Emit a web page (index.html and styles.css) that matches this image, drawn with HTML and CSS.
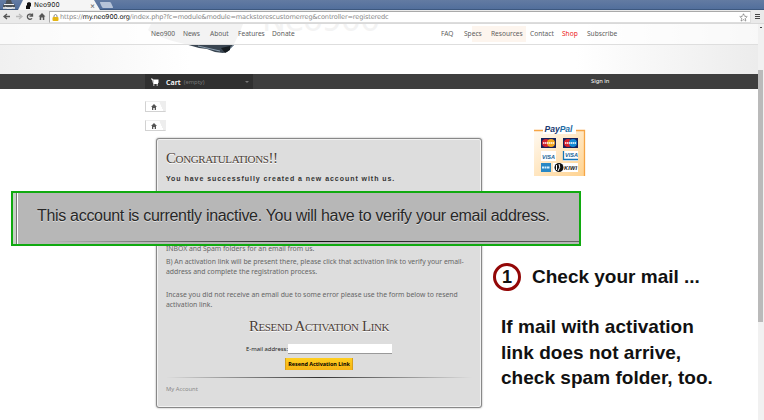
FILE: index.html
```html
<!DOCTYPE html>
<html lang="en">
<head>
<meta charset="utf-8">
<title>Neo900</title>
<link rel="stylesheet" href="styles.css">
</head>
<body>
<div class="tabs">
  <svg class="incognito" width="18" height="10" viewBox="0 0 18 10"><rect x="3" y="7" width="12" height="2" fill="#c9ced3"/><path d="M6 1L7 0H11L12 3L15 5V7H3V5L6 3Z" fill="#4b5157"/><path d="M4 4.500H14M5 7L8 8.500L9 8L11 8.500L13 7" stroke="#edf0f2" fill="none"/></svg>
  <div class="tab"><svg width="6" height="8" viewBox="0 0 6 8"><path d="M1 2L3 1L5 2V5L4 6V8H0V5L1 4Z" fill="#111"/></svg><span>Neo900</span><b>×</b></div>
  <i class="newtab"></i>
</div>
<div class="toolbar">
  <svg width="48" height="13" viewBox="0 0 48 13"><g fill="none" stroke="#555" stroke-width="1.3"><path d="M10 6.5H4M7 4L4 6.5L7 9"/><path stroke="#bbb" d="M16 6.5H22M19 4L22 6.5L19 9"/><path d="M32 5A2.6 2.6 0 1 0 32 8.3M32.5 3.5V6H29.5"/></g><path d="M38.5 6.5L42 3L45.5 6.5H44.3V10H42.8V7.6H41.2V10H39.7V6.5Z" fill="#555"/></svg>
  <div class="address"><svg width="7" height="9" viewBox="0 0 7 9"><path d="M2 4V2.5Q3.5 .5 5 2.5V4" stroke="#888" fill="none"/><rect x=".5" y="4" width="6" height="4" rx="1" fill="#e4b516"/></svg><span class="url">https://<b>my.neo900.org</b>/index.php?fc=module&amp;module=mackstorescustomerreg&amp;controller=registeredc</span><svg class="star" width="9" height="9" viewBox="0 0 9 9"><path d="M4.5 .8L5.6 3.2L8.2 3.5L6.3 5.3L6.9 8L4.5 6.7L2.1 8L2.7 5.3L.8 3.5L3.4 3.2Z" fill="none" stroke="#888" stroke-dasharray="2 .5"/></svg></div>
  <i class="burger"></i>
</div>
<div class="viewport">
<div class="page">
  <header>
    <svg class="phone" width="100" height="30" viewBox="0 0 100 30"><path d="M0 6L3 0H95L92 8L86 20H37Q10 14 0 6Z" fill="#dcdcdc"/><path d="M37 20H86L79 28L75 29L67 28L59 25L51 24Z" fill="#394551"/><path d="M50 22L72 27M79 28L86 21" stroke="#8ea0b0"/><path d="M73 24L77 29L82 26V22Z" fill="#151b20"/></svg>
    <div class="watermark">Neo900</div>
    <nav>
      <a class="n1">Neo900</a><a>News</a><a>About</a><a>Features</a><a>Donate</a><a>FAQ</a><a>Specs</a><a>Resources</a><a>Contact</a><a class="shop">Shop</a><a>Subscribe</a>
    </nav>
  </header>
  <div class="bar">
    <div class="cart"><svg width="8" height="8" viewBox="0 0 8 8"><path d="M0 1H1.5L2.5 5.5H7" stroke="#fff" fill="none"/><path d="M2 1.5H7.5V5H3Z" fill="#fff"/><path d="M2 6.5H3.5V7.5H2ZM5.5 6.5H7V7.5H5.5Z" fill="#fff"/></svg><b>Cart</b><span>(empty)</span><i></i></div>
    <a>Sign in</a>
  </div>
  <div class="columns">
    <main>
      <div class="crumb"><svg width="6" height="6" viewBox="0 0 6 6"><path d="M0 3L3 0L6 3H5V6H3.7V4H2.3V6H1V3Z" fill="#555"/></svg></div>
      <div class="crumb"><svg width="6" height="6" viewBox="0 0 6 6"><path d="M0 3L3 0L6 3H5V6H3.7V4H2.3V6H1V3Z" fill="#555"/></svg></div>
      <section class="card">
        <h1>Congratulations!!</h1>
        <p class="lead">You have successfully created a new account with us.</p>
        <div class="steps">
          <p class="l1">INBOX and Spam folders for an email from us.</p>
          <p>B) An activation link will be present there, please click that activation link to verify your email-</p>
          <p>address and complete the registration process.</p>
          <p class="l4">Incase you did not receive an email due to some error please use the form below to resend</p>
          <p>activation link.</p>
        </div>
        <h2>Resend Activation Link</h2>
        <div class="field"><label>E-mail address:</label><i></i></div>
        <div class="button">Resend Activation Link</div>
        <div class="rule"></div>
        <a class="account">My Account</a>
      </section>
    </main>
    <aside>
      <svg width="54" height="54" viewBox="0 0 54 54">
        <defs><linearGradient id="pp" x1="0" y1="0" x2="1" y2="1"><stop offset="0" stop-color="#fffaf2"/><stop offset="1" stop-color="#ffd28e"/></linearGradient></defs>
        <path d="M1 8H52V53H1Z" fill="url(#pp)"/><path d="M1 7.5H51.5V53" fill="none" stroke="#f6a545" stroke-width="1.3"/>
        <rect x="10" y="1" width="33" height="10" fill="#fff"/>
        <text x="11.500" y="9" class="pp" textLength="28" lengthAdjust="spacingAndGlyphs"><tspan fill="#203a70">Pay</tspan><tspan fill="#1d6da5">Pal</tspan></text>
        <rect x="8" y="15" width="15" height="10" fill="#15205b"/><circle cx="13" cy="20" r="4" fill="#d22330"/><circle cx="18" cy="20" r="4" fill="#f4a720"/>
        <rect x="30" y="15" width="15" height="10" fill="#15205b"/><circle cx="35" cy="20" r="4" fill="#d9202c"/><circle cx="40" cy="20" r="4" fill="#168ad4"/>
        <path d="M10 20H21M32 20H43" stroke="#fff" stroke-width="1.3" stroke-dasharray="1.5 .5"/>
        <rect x="8" y="28" width="15" height="10" fill="#fff"/><text x="9" y="35.5" class="vi" textLength="13" fill="#156295">VISA</text>
        <rect x="30" y="28" width="15" height="10" fill="#fff"/><path d="M30.500 28V36.500H45" fill="none" stroke="#1476b8" stroke-width="1.3"/><text x="32" y="34" class="vi" textLength="13" fill="#156295">VISA</text>
        <rect x="8" y="40" width="10" height="9" fill="#2888c5"/><path d="M9 44.5H17" stroke="#d5efff" stroke-width="2" stroke-dasharray="2 .5"/>
        <rect x="20" y="40" width="25" height="9" fill="#fff"/><circle cx="26" cy="44.5" r="4.5" fill="#111"/><path d="M23.500 42V47M26 41Q28 44 25 48" fill="none" stroke="#fff"/><text x="31" y="47" class="vi" textLength="13" fill="#111">KIWI</text>
      </svg>
    </aside>
  </div>
</div>
<div class="scroll"><i></i></div>
</div>
<div class="callout"><span>This account is currently inactive. You will have to verify your email address.</span><i></i></div>
<div class="note first"><span class="num">1</span><span class="text">Check your mail ...</span></div>
<div class="note second"><span>If mail with activation</span><br><span>link does not arrive,</span><br><span>check spam folder, too.</span></div>
</body>
</html>
```
FILE: styles.css
```css
* { box-sizing: border-box; }
body { margin: 0; width: 764px; height: 420px; overflow: hidden; background: #fff; font-family: "Noto Sans", sans-serif; position: relative; }
h1, h2, p { margin: 0; font-weight: normal; white-space: nowrap; }
i { font-style: normal; }
b, span, a, label { white-space: nowrap; }
svg { display: block; flex: none; }

.tabs { height: 10px; display: flex; background: linear-gradient(#637ba2, #526f9c); border-bottom: 1px solid #3d587f; }
.incognito { width: 18px; }
.tab { width: 82px; height: 10px; padding-left: 8px; display: flex; align-items: center; gap: 2px; background: #f5f5f5; clip-path: polygon(5px 0, 76px 0, 82px 100%, 0 100%); font: 6.6px/9px "DejaVu Sans", sans-serif; color: #222; }
.tab b { margin-left: auto; margin-right: 5px; font-size: 6px; color: #666; }
.newtab { width: 11px; height: 6px; margin: 2px 0 0 1px; background: #b6c3d8; transform: skewX(25deg); border-radius: 1px; }
.toolbar { height: 14px; display: flex; background: #eaeaea; border-bottom: 1px solid #d9d9d9; }
.address { width: 702px; height: 12px; margin: 1px 0 0 1px; display: flex; align-items: center; gap: 1px; padding: 0 2px; background: #fff; border: 1px solid #aaa; border-bottom-color: #ddd; border-right-color: #ddd; }
.url { font: 6.6px/10px "DejaVu Sans", sans-serif; color: #888; letter-spacing: -.145px; }
.url b { font-weight: normal; color: #111; }
.star { margin-left: auto; }
.burger { width: 5px; height: 5px; margin: 4px 0 0 4px; border-top: 1px solid #444; border-bottom: 1px solid #444; background: linear-gradient(#444, #444) 0 1px / 100% 1px no-repeat; }

.viewport { display: flex; height: 396px; }
.page { width: 758px; }
.scroll { width: 6px; background: #f1f1f1; padding: 46px 1px 0 0; position: relative; }
.scroll::before { content: ""; position: absolute; top: 3px; left: 2px; width: 2px; height: 1px; background: #444; }
.scroll i { display: block; height: 252px; background: #bababa; }

header { height: 50px; position: relative; overflow: hidden; background: linear-gradient(90deg, #f0f0f0, #fff 25%, #fff 76%, #ececec); }
.phone { position: absolute; left: 148px; top: 0; }
.watermark { position: absolute; left: 262px; top: -21px; font: 32px/34px "DejaVu Sans", sans-serif; letter-spacing: -1.2px; color: #ddd; }
nav { position: relative; height: 21px; border-bottom: 1px solid #dedede; display: grid; grid-template-columns: 151px 32px 27px 28px 34px 169px 23px 27px 39px 32px 25px 1fr; line-height: 20px; font-size: 6.6px; color: #5d5d5d; background: linear-gradient(#fdf5ee, #fdf5ee) 472px 2px / 54px 16px no-repeat, rgba(255,255,255,.65); }
.n1 { grid-column: 2; }
.shop { color: #ed1717; }

.bar { height: 15px; background: #3e3e3e; display: flex; padding-left: 145px; color: #fff; line-height: 14px; }
.bar > a { margin-left: 338px; font-size: 5.8px; line-height: 15px; }
.cart { width: 108px; height: 15px; background: #303030; display: flex; align-items: center; padding-left: 6px; }
.cart b { font-size: 7.1px; margin-left: 7px; font-weight: 600; }
.cart span { margin-left: 3px; font-size: 5.8px; color: #777; }
.cart i { margin: 1px 4px 0 auto; border: 2px solid transparent; border-top-color: #777; border-bottom: 0; }

.columns { display: flex; padding-left: 145px; }
main { width: 388px; padding-top: 12px; }
.crumb { width: 21px; height: 11px; margin-bottom: 8px; padding: 2px 0 0 5px; border: 1px solid #d2d2d2; border-top-color: #eee; border-right-color: #eee; background: linear-gradient(65deg, #fff 75%, #eee 76%); }
.card { width: 326px; height: 270px; margin: -1px 0 0 11px; border: 1px solid #888; border-radius: 3px; background: #ddd; padding: 0 9px; box-shadow: inset 0 0 0 1px #f2f2f2, 0 0 2px #999; display: flex; flex-direction: column; }
h1, h2 { font-family: "Liberation Serif", serif; font-variant: small-caps; color: #4b4037; text-shadow: 0 1px #fff; line-height: 18px; letter-spacing: -.4px; }
h1 { font-size: 15px; margin-top: 10px; }
.lead { font: bold 7px/10px "Liberation Sans", sans-serif; letter-spacing: .955px; color: #333; margin-top: 7px; height: 10px; }
.steps { margin-top: 60px; height: 66px; color: #666; font-size: 6.85px; }
.steps p { height: 9.5px; line-height: 9.5px; }
.steps .l1 { margin-bottom: 3.5px; }
.steps .l4 { margin-top: 14px; }
h2 { align-self: center; font-size: 15px; margin-top: 7px; }
.field { display: flex; margin: 9px 0 0 80px; height: 10px; }
label { width: 42px; font-size: 5.9px; line-height: 10px; color: #222; }
.field i { width: 104px; background: #fff; border-bottom: 1px solid #999; }
.button { width: 68px; height: 12px; margin: 4px 0 0 119px; background: linear-gradient(#ffcf20, #f6b315); border: 1px solid #d7a01e; border-width: 0 1px; font-size: 5.4px; font-weight: 700; line-height: 12px; text-align: center; white-space: nowrap; }
.rule { height: 1px; margin-top: 7px; background: linear-gradient(90deg, #ddd, #333 50%, #ddd); }
.account { font-size: 5.8px; line-height: 10px; margin-top: 6px; color: #888; }
aside { padding-top: 34px; }
.pp { font: italic bold 9.5px "Liberation Sans", sans-serif; }
.vi { font: italic bold 5.5px "Liberation Sans", sans-serif; }

.callout { position: absolute; left: 11px; top: 191px; width: 570px; height: 55px; background: #b7b7b7; border: 2px solid #10aa10; padding-left: 24px; box-shadow: inset 3px 0 #c5d0c5, inset 4px 0 #777, inset 5px 0 #fff; font: 16px/46px "Liberation Sans", sans-serif; color: #272727; text-shadow: 0 1px #ddd; }
.callout span { display: block; height: 48px; letter-spacing: -.31px; }
.callout i { display: block; height: 1px; margin-left: 8px; background: linear-gradient(90deg, #b7b7b7, #111 50%, #666); }
.note { position: absolute; font: bold 19px/25.5px "Liberation Sans", sans-serif; color: #111; }
.first { left: 493px; top: 263px; display: flex; align-items: center; }
.num { width: 28px; height: 28px; border: 3px solid #930707; border-radius: 50%; line-height: 22px; text-align: center; font-size: 18px; }
.text { margin-left: 11px; }
.second { left: 501px; top: 314px; letter-spacing: .03px; }
```
